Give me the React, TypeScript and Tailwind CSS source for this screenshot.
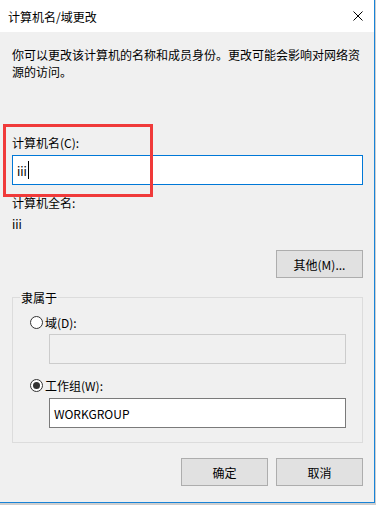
const font = {
  fontFamily: '"Noto Sans CJK SC", "Noto Sans", sans-serif',
};

const Radio = ({ checked, label }: { checked?: boolean; label: string }) => (
  <div className="flex h-[17px] items-center">
    <span className="flex size-[13px] items-center justify-center rounded-full border border-[#333333] bg-white">
      {checked ? <span className="size-[7px] rounded-full bg-[#333333]" /> : null}
    </span>
    <span className="ml-[2px]">{label}</span>
  </div>
);

const Button = ({ children }: { children: React.ReactNode }) => (
  <button className="flex h-[28px] w-[87px] items-center justify-center border border-[#adadad] bg-[#e1e1e1] text-[12px] text-black">
    {children}
  </button>
);

const App = () => {
  return (
    <div className="h-[505px] w-[376px] bg-[#cfcfcf] text-[12px] leading-[17px] text-black" style={font}>
      <div className="relative flex h-[503px] w-[375px] flex-col border-r border-b border-[#1883d7] bg-[#f0f0f0]">
        {/* title bar */}
        <div className="flex h-[32px] shrink-0 items-center justify-between bg-white pl-2 pr-[10px]">
          <span>计算机名/域更改</span>
          <svg width="10" height="10" viewBox="0 0 10 10" className="mr-[1px]">
            <path d="M0.5 0.5L9.5 9.5M9.5 0.5L0.5 9.5" stroke="#000" strokeWidth="1" />
          </svg>
        </div>

        <div className="flex flex-col pl-3 pr-[12px]">
          <p className="mt-[14px]">
            你可以更改该计算机的名称和成员身份。更改可能会影响对网络资
            <br />
            源的访问。
          </p>

          <div className="mt-[54px]">计算机名(C):</div>
          <div className="mt-[4px] flex h-[30px] w-[351px] items-center border border-[#0078d7] bg-white pl-[4px]">
            <span>iii</span>
            <span className="ml-[1px] h-[18px] w-px bg-black" />
          </div>

          <div className="mt-[9px]">计算机全名:</div>
          <div className="mt-[4px]">iii</div>

          <div className="mt-[18px] flex w-[351px] justify-end">
            <Button>其他(M)...</Button>
          </div>

          <div className="relative mt-[19px] w-[351px] border border-[#dcdcdc] pb-[14px] pl-[17px] pt-[16px]">
            <span className="absolute -top-[9px] left-[7px] bg-[#f0f0f0] px-px">隶属于</span>
            <Radio label="域(D):" />
            <div className="ml-[19px] mt-[3px] h-[30px] w-[297px] border border-[#cccccc] bg-[#f0f0f0]" />
            <div className="mt-[13px]">
              <Radio checked label="工作组(W):" />
            </div>
            <div className="ml-[19px] mt-[4px] flex h-[30px] w-[297px] items-center border border-[#7a7a7a] bg-white pl-[4px]">
              WORKGROUP
            </div>
          </div>

          <div className="mt-[15px] flex w-[351px] justify-end gap-[8px]">
            <Button>确定</Button>
            <Button>取消</Button>
          </div>
        </div>

        {/* annotation highlight */}
        <div className="absolute left-[3px] top-[124px] h-[73px] w-[150px] border-[3px] border-[#f03a3a]" />
      </div>
    </div>
  );
};

export default App;
